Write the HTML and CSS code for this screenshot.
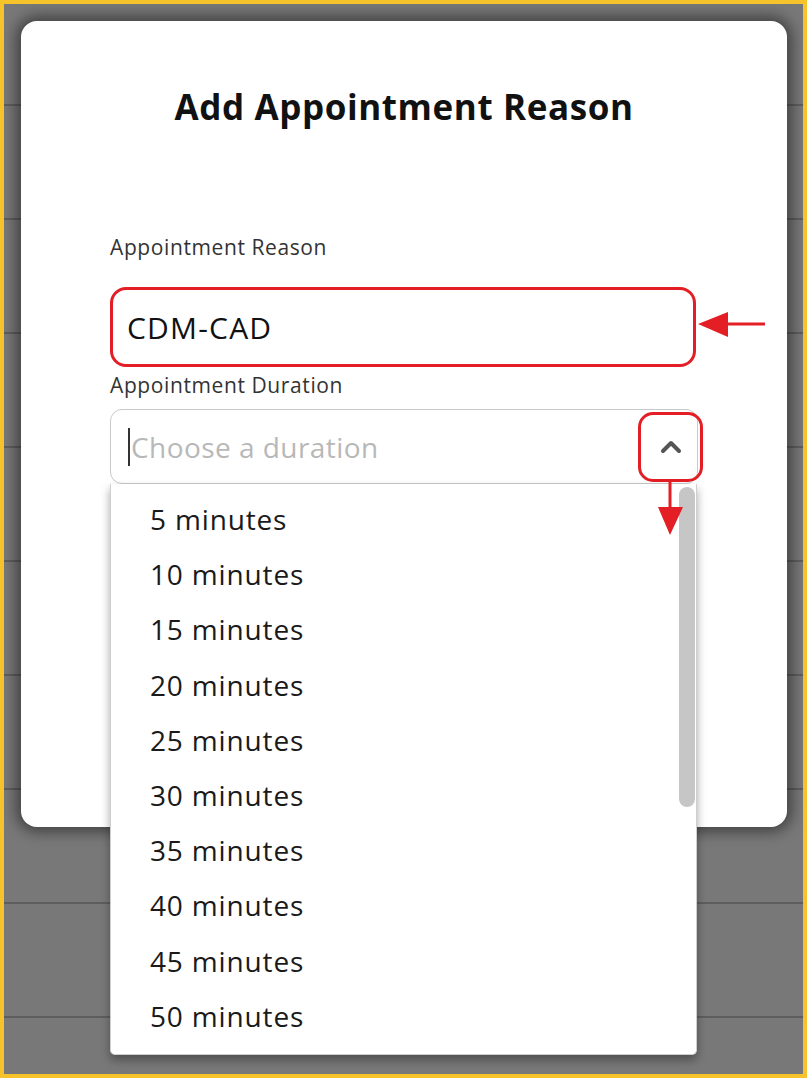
FILE: index.html
```html
<!DOCTYPE html>
<html lang="en">
<head>
  <meta charset="UTF-8">
  <meta name="viewport" content="width=device-width, initial-scale=1.0">
  <title>Add Appointment Reason</title>
  <link rel="stylesheet" href="styles.css">
</head>
<body>
  <div class="frame">
    <div class="modal">
      <h1>Add Appointment Reason</h1>

      <label class="label label-reason" for="reason">Appointment Reason</label>
      <input class="field marked" id="reason" type="text" value="CDM-CAD">

      <label class="label label-duration">Appointment Duration</label>
      <div class="select">
        <span class="caret"></span>
        <span class="placeholder">Choose a duration</span>
        <span class="toggle marked-round">
          <svg width="22" height="14" viewBox="0 0 22 14"><path d="M3 11 L11 3 L19 11" fill="none" stroke="#555" stroke-width="4" stroke-linecap="round" stroke-linejoin="round"/></svg>
        </span>

        <ul class="options">
          <li>5 minutes</li>
          <li>10 minutes</li>
          <li>15 minutes</li>
          <li>20 minutes</li>
          <li>25 minutes</li>
          <li>30 minutes</li>
          <li>35 minutes</li>
          <li>40 minutes</li>
          <li>45 minutes</li>
          <li>50 minutes</li>
          <span class="scroll-thumb"></span>
        </ul>
      </div>
    </div>

    <!-- annotation arrows -->
    <svg class="arrow arrow-left" width="72" height="30" viewBox="0 0 72 30">
      <line x1="26" y1="14" x2="69" y2="14" stroke="#e31e24" stroke-width="3"/>
      <polygon points="2,14 32,2 32,27" fill="#e31e24"/>
    </svg>
    <svg class="arrow arrow-down" width="30" height="58" viewBox="0 0 30 58">
      <line x1="15" y1="2" x2="15" y2="30" stroke="#e31e24" stroke-width="3"/>
      <polygon points="3,27 28,27 15,55" fill="#e31e24"/>
    </svg>
  </div>
</body>
</html>
```

FILE: styles.css
```css
* { box-sizing: border-box; }
html, body { margin: 0; padding: 0; }
body {
  font-family: 'Open Sans', 'Noto Sans', sans-serif;
  color: #1a1a1a;
}

.frame {
  position: relative;
  width: 807px; height: 1078px;
  border: 4px solid #f6c42a;
  padding: 17px;
  overflow: hidden;
  background-color: #787878;
  background-image: repeating-linear-gradient(to bottom, transparent 0 112px, #5e5e5e 112px 114px);
  background-position: 0 -12px;
}

.modal {
  width: 766px; height: 806px;
  padding: 0 89px;
  background: #fff;
  border-radius: 16px;
  box-shadow: 0 0 14px 5px rgba(0,0,0,0.45);
}

h1 {
  margin: 0; padding-top: 64px;
  font-size: 35px; line-height: 44px;
  letter-spacing: 0.6px;
  font-weight: 700;
  text-align: center;
  color: #111;
}

.label {
  display: block;
  font-size: 21px; line-height: 24px;
  letter-spacing: 0.6px;
  color: #333;
}
.label-reason { margin-top: 106px; }
.label-duration { margin-top: 6px; }

.field {
  display: block;
  width: 586px; height: 80px;
  margin-top: 28px;
  padding: 0 14px;
  font-family: inherit;
  font-size: 30px; color: #111;
  letter-spacing: 1.2px;
  background: #fff;
  border: 1px solid #ccc;
  border-radius: 16px;
  outline: none;
}
.field.marked { border: 3px solid #e31e24; }

.select {
  position: relative;
  display: flex; align-items: center;
  width: 588px; height: 75px;
  margin-top: 12px;
  padding-left: 17px;
  border: 1px solid #c9c9c9;
  border-radius: 12px;
  background: #fff;
}
.caret {
  width: 2px; height: 38px;
  margin-right: 1px;
  background: #333;
}
.placeholder {
  font-size: 28px; color: #b8b8b8;
  letter-spacing: 0.45px;
}
.toggle {
  position: absolute;
  left: 527px; top: 2px;
  width: 65px; height: 70px;
  display: flex; align-items: center; justify-content: center;
}
.toggle.marked-round {
  border: 3px solid #e31e24;
  border-radius: 15px;
}

.options {
  position: absolute;
  left: -1px; top: 74px;
  width: 587px; height: 571px;
  margin: 0; padding: 8px 0 0;
  list-style: none;
  background: #fff;
  border: 1px solid #cfcfcf;
  border-top: none;
  border-radius: 0 0 5px 5px;
  box-shadow: 0 5px 10px rgba(0,0,0,0.35);
}
.options li {
  height: 55.2px;
  padding-left: 39px;
  font-size: 28px; line-height: 55px;
  letter-spacing: 0.85px;
  color: #1a1a1a;
}
.scroll-thumb {
  position: absolute;
  right: 1px; top: 3px;
  width: 16px; height: 320px;
  border-radius: 8px;
  background: #c6c6c6;
}

.arrow { position: absolute; }
.arrow-left { left: 692px; top: 306px; }
.arrow-down { left: 651px; top: 476px; }
```
